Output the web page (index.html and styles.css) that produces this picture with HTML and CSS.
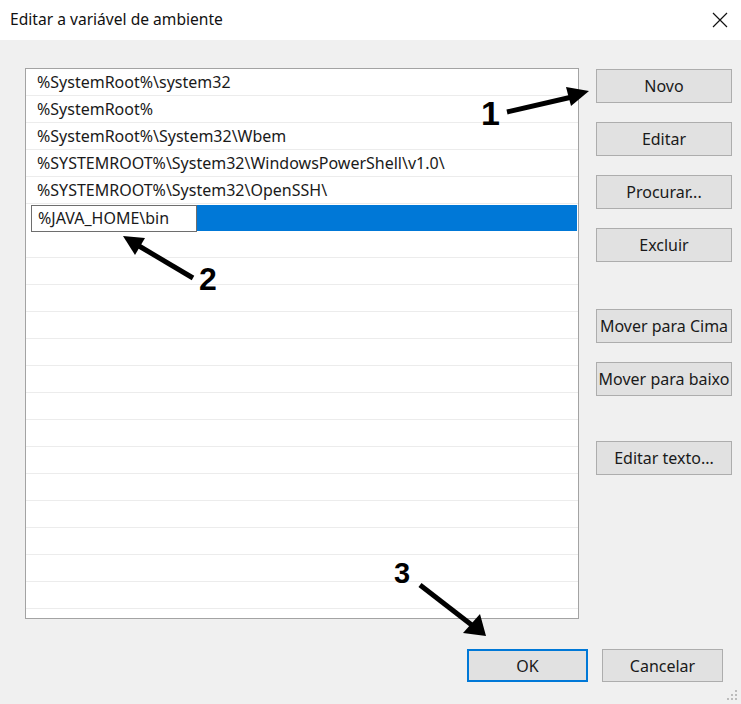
FILE: index.html
```html
<!DOCTYPE html>
<html lang="pt">
<head>
<meta charset="utf-8">
<title>Editar a variável de ambiente</title>
<link rel="stylesheet" href="styles.css">
</head>
<body>
<div class="window">
  <div class="titlebar">
    <span class="title">Editar a variável de ambiente</span>
    <svg class="close" width="16" height="16" viewBox="0 0 16 16"><path d="M1 1 L15 15 M15 1 L1 15" stroke="#111" stroke-width="1.2" fill="none"/></svg>
  </div>
  <div class="body">
    <div class="main">
      <div class="list">
        <div class="row">%SystemRoot%\system32</div>
        <div class="row">%SystemRoot%</div>
        <div class="row">%SystemRoot%\System32\Wbem</div>
        <div class="row">%SYSTEMROOT%\System32\WindowsPowerShell\v1.0\</div>
        <div class="row">%SYSTEMROOT%\System32\OpenSSH\</div>
        <div class="row row-edit"><span class="editbox">%JAVA_HOME\bin</span><span class="selfill"></span></div>
        <div class="row"></div><div class="row"></div><div class="row"></div><div class="row"></div>
        <div class="row"></div><div class="row"></div><div class="row"></div><div class="row"></div>
        <div class="row"></div><div class="row"></div><div class="row"></div><div class="row"></div>
        <div class="row"></div><div class="row"></div><div class="row"></div>
      </div>
      <div class="buttons">
        <button class="btn">Novo</button>
        <button class="btn">Editar</button>
        <button class="btn">Procurar...</button>
        <button class="btn">Excluir</button>
        <button class="btn btn-group">Mover para Cima</button>
        <button class="btn">Mover para baixo</button>
        <button class="btn btn-group2">Editar texto...</button>
      </div>
    </div>
    <div class="footer">
      <button class="btn btn-foot btn-ok">OK</button>
      <button class="btn btn-foot">Cancelar</button>
    </div>
  </div>
  <svg class="grip" width="12" height="12" viewBox="0 0 12 12">
    <rect x="9" y="1" width="2" height="2" fill="#bcbcbc"/>
    <rect x="5" y="5" width="2" height="2" fill="#bcbcbc"/>
    <rect x="9" y="5" width="2" height="2" fill="#bcbcbc"/>
    <rect x="1" y="9" width="2" height="2" fill="#bcbcbc"/>
    <rect x="5" y="9" width="2" height="2" fill="#bcbcbc"/>
    <rect x="9" y="9" width="2" height="2" fill="#bcbcbc"/>
  </svg>
  <svg class="annot" width="741" height="704" viewBox="0 0 741 704">
    <g fill="#000" stroke="#000">
      <line x1="507" y1="112" x2="572" y2="97" stroke-width="5"/>
      <polygon points="589,91 566,87 571,106" stroke="none"/>
      <line x1="193" y1="278" x2="139" y2="246" stroke-width="5"/>
      <polygon points="123,236 145,238 135,255" stroke="none"/>
      <line x1="420" y1="585" x2="473" y2="626" stroke-width="5"/>
      <polygon points="486,636 480,614 463,633" stroke="none"/>
    </g>
    <g class="nums">
      <text x="481" y="125" font-size="34">1</text>
      <text x="199" y="290" font-size="32">2</text>
      <text x="394" y="583" font-size="29">3</text>
    </g>
  </svg>
</div>
</body>
</html>
```
FILE: styles.css
```css
* { box-sizing: border-box; }
html, body { margin: 0; padding: 0; background: #f0f0f0; }
.window {
  position: relative;
  width: 741px;
  height: 704px;
  background: #f0f0f0;
  font-family: "Noto Sans", "Open Sans", sans-serif;
  font-size: 16px;
  color: #000;
  overflow: hidden;
}
.titlebar {
  height: 40px;
  background: #fff;
  display: flex;
  align-items: center;
  justify-content: space-between;
  padding: 0 13px 2px 10px;
}
.title { font-size: 15.6px; color: #111; }
.close { display: block; margin-top: 1px; }
.main {
  display: flex;
  gap: 17px;
  padding: 28px 0 0 25px;
}
.list {
  width: 554px;
  height: 551px;
  background: #fff;
  border: 1px solid #a3a3a3;
  overflow: hidden;
}
.row {
  height: 27px;
  line-height: 26px;
  border-bottom: 1px solid #ececec;
  padding-left: 11px;
  white-space: nowrap;
  color: #1a1a1a;
}
.row-edit {
  display: flex;
  padding-left: 5px;
  border-bottom: none;
  position: relative;
  z-index: 1;
}
.editbox {
  width: 166px;
  height: 27px;
  margin-top: 1px;
  border: 1px solid #6e6e6e;
  background: #fff;
  padding-left: 6px;
  line-height: 25px;
}
.selfill {
  flex: 1;
  height: 26px;
  margin: 1px 1px 0 0;
  background: #0078d7;
}
.buttons {
  display: flex;
  flex-direction: column;
  gap: 19px;
  width: 136px;
  margin-top: 1px;
}
.btn {
  height: 34px;
  background: #e1e1e1;
  border: 1px solid #adadad;
  font-family: "Noto Sans", "Open Sans", sans-serif;
  font-size: 16px;
  color: #1a1a1a;
  padding: 0;
  margin: 0;
  white-space: nowrap;
}
.btn-group { margin-top: 28px; }
.btn-group2 { margin-top: 26px; }
.footer {
  display: flex;
  justify-content: flex-end;
  gap: 14px;
  padding: 30px 18px 0 0;
}
.btn-foot { width: 121px; height: 33px; }
.btn-ok { border: 2px solid #0078d7; }
.grip { position: absolute; right: 3px; bottom: 3px; }
.annot { position: absolute; left: 0; top: 0; pointer-events: none; }
.nums text { font-family: "Liberation Sans", Arial, sans-serif; font-weight: bold; fill: #000; }
```
